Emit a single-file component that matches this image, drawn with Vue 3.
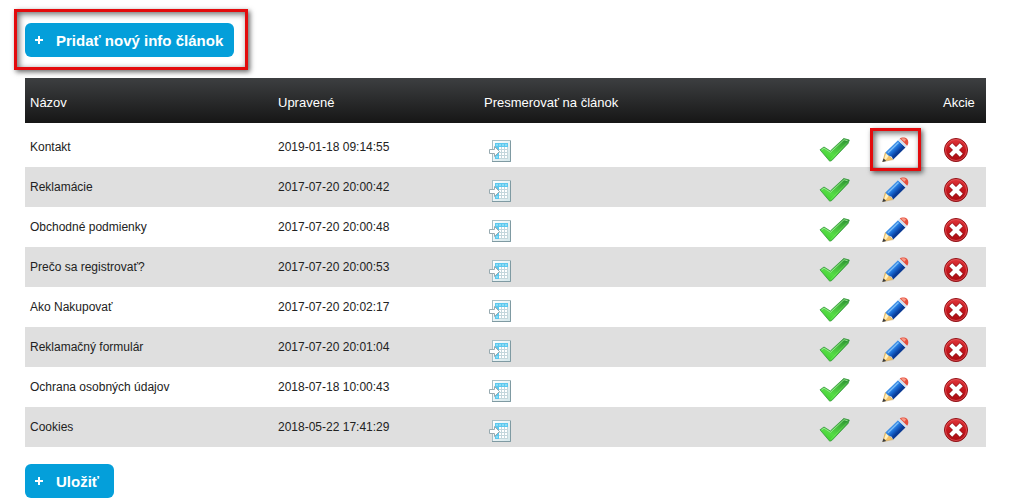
<script setup>
import { ref } from 'vue'

const articles = ref([
  { name: 'Kontakt', updated: '2019-01-18 09:14:55', marked: true },
  { name: 'Reklamácie', updated: '2017-07-20 20:00:42' },
  { name: 'Obchodné podmienky', updated: '2017-07-20 20:00:48' },
  { name: 'Prečo sa registrovať?', updated: '2017-07-20 20:00:53' },
  { name: 'Ako Nakupovať', updated: '2017-07-20 20:02:17' },
  { name: 'Reklamačný formulár', updated: '2017-07-20 20:01:04' },
  { name: 'Ochrana osobných údajov', updated: '2018-07-18 10:00:43' },
  { name: 'Cookies', updated: '2018-05-22 17:41:29' }
])
</script>

<template>
  <main class="page">
    <svg class="defs" aria-hidden="true">
      <defs>
        <linearGradient id="green" x1="1" y1="0" x2="0.3" y2="1">
          <stop offset="0" stop-color="#2a8a35" />
          <stop offset="0.4" stop-color="#43b83c" />
          <stop offset="0.75" stop-color="#55dc45" />
          <stop offset="1" stop-color="#3fd02f" />
        </linearGradient>
        <linearGradient id="blue" gradientUnits="userSpaceOnUse" x1="9" y1="8" x2="18" y2="17">
          <stop offset="0.1" stop-color="#4b97e6" />
          <stop offset="0.35" stop-color="#2f86e6" />
          <stop offset="0.6" stop-color="#1560c8" />
          <stop offset="0.85" stop-color="#0a3a94" />
        </linearGradient>
        <linearGradient id="red" x1="0" y1="0" x2="0" y2="1">
          <stop offset="0" stop-color="#e0383c" />
          <stop offset="0.5" stop-color="#c4161c" />
          <stop offset="1" stop-color="#a80c12" />
        </linearGradient>
        <linearGradient id="sheet" x1="0" y1="0" x2="1" y2="1">
          <stop offset="0" stop-color="#ffffff" />
          <stop offset="1" stop-color="#d3e6ea" />
        </linearGradient>
      </defs>
    </svg>

    <div class="toolbar">
      <button type="button" class="btn btn-add"><span class="plus" aria-hidden="true"></span>Pridať nový info článok</button>
      <span class="callout callout-add" aria-hidden="true"></span>
    </div>

    <table class="articles">
      <colgroup>
        <col class="c-name" />
        <col class="c-date" />
        <col />
        <col class="c-icon" />
        <col class="c-icon" />
        <col class="c-last" />
      </colgroup>
      <thead>
        <tr>
          <th scope="col">Názov</th>
          <th scope="col">Upravené</th>
          <th scope="col">Presmerovať na článok</th>
          <td></td>
          <td></td>
          <th scope="col">Akcie</th>
        </tr>
      </thead>
      <tbody>
        <tr v-for="a in articles" :key="a.name">
          <td>{{ a.name }}</td>
          <td>{{ a.updated }}</td>
          <td>
            <button type="button" class="icon redirect" :aria-label="'Presmerovať: ' + a.name">
              <svg width="22" height="23" viewBox="0 0 22 23">
                <rect x="3.5" y="0.5" width="18" height="21" fill="url(#sheet)" stroke="#a9bfc5" />
                <path d="M3 21.500h18.500V1" fill="none" stroke="#7f9aa2" />
                <rect x="6" y="3" width="13" height="16" fill="#c3d6dc" />
                <path d="M6 3h13v4H6zM6 7h4v12H6z" fill="#5cc8ee" />
                <path d="M10 7h2v2h-2zM13 7h2v2h-2zM16 7h2v2h-2zM10 10h2v2h-2zM13 10h2v2h-2zM16 10h2v2h-2zM10 13h2v2h-2zM13 13h2v2h-2zM16 13h2v2h-2zM10 16h2v2h-2zM13 16h2v2h-2zM16 16h2v2h-2z" fill="#fff" />
                <path d="M7 4h2v2H7zM10 4h2v2h-2zM13 4h2v2h-2zM16 4h2v2h-2zM7 16h2v2H7z" fill="#8edcf5" />
                <path d="M.5 9.500H5.500V6.500L10.500 11.500L5.500 16.500V13.500H.5z" fill="#fff" stroke="#98aab0" />
              </svg>
            </button>
          </td>
          <td>
            <button type="button" class="icon" :aria-label="'Aktívny: ' + a.name">
              <svg width="31" height="26" viewBox="0 0 31 26">
                <path d="M1 12.800L5 10L11.300 14L24.700 1.500L30.300 3L29 6.500L12.800 23.500L10.700 24.200z" fill="url(#green)" stroke="#36983c" stroke-width="0.800" stroke-linejoin="round" />
                <path d="M2.500 13L5 11.200L11.500 15.300L25 2.700L28.700 3.800" fill="none" stroke="#9be893" stroke-width="0.900" />
                <path d="M11.800 22.500L28 5.500" fill="none" stroke="#7bef5f" opacity="0.500" />
              </svg>
            </button>
          </td>
          <td>
            <div class="edit">
              <button type="button" class="icon" :aria-label="'Upraviť: ' + a.name">
                <svg width="28" height="26" viewBox="0 0 28 26">
                  <path d="M1.800 24.600L4.300 15.500L12.200 22.600z" fill="#f3c368" stroke="#c69c50" stroke-width="0.500" />
                  <path d="M3.300 21.500L5 16.800L8 18.500L4.800 22.800z" fill="#fff0bd" />
                  <path d="M1.300 25L2.500 21.500L5.200 24z" fill="#3a3d42" />
                  <path d="M4.300 15.500L17 3.200L24.500 10.500L12.200 22.600L10.800 19.800L7.500 18.500z" fill="url(#blue)" />
                  <path d="M7 15.800L17.500 5.500" stroke="#7dbdf7" stroke-width="1.200" />
                  <path d="M17 3.200L18.800 1.600L26.200 8.800L24.500 10.500z" fill="#d3e0ee" />
                  <path d="M18.800 1.600C20.500 0 24.500 .3 26 1.800C27.600 3.400 27.900 7 26.200 8.800z" fill="#e5513f" />
                  <path d="M20 1.800C22 .9 24 1.300 25 2.500L23.500 4.800z" fill="#f79a88" />
                </svg>
              </button>
              <span v-if="a.marked" class="callout callout-edit" aria-hidden="true"></span>
            </div>
          </td>
          <td>
            <button type="button" class="icon" :aria-label="'Vymazať: ' + a.name">
              <svg width="26" height="26" viewBox="0 0 26 26">
                <circle cx="13" cy="13" r="11.500" fill="url(#red)" stroke="#8f1015" />
                <circle cx="13" cy="13" r="10.500" fill="none" stroke="#e2575a" stroke-width="0.800" />
                <path d="M9.200 9.200L16.800 16.800M16.800 9.200L9.200 16.800" stroke="#8e1217" stroke-width="5.400" stroke-linecap="square" />
                <path d="M9.200 9.200L16.800 16.800M16.800 9.200L9.200 16.800" stroke="#fff" stroke-width="4.200" stroke-linecap="square" />
              </svg>
            </button>
          </td>
        </tr>
      </tbody>
    </table>

    <button type="button" class="btn"><span class="plus" aria-hidden="true"></span>Uložiť</button>
  </main>
</template>

<style>
body {
  margin: 0;
  background: #fff;
}
</style>

<style scoped>
.page {
  padding: 23px 29px 0 25px;
  font-family: "Liberation Sans", Arial, sans-serif;
  font-size: 12px;
  color: #222;
}

.defs {
  position: absolute;
  width: 0;
  height: 0;
}

.toolbar {
  position: relative;
  width: fit-content;
  margin-bottom: 21px;
}

.btn {
  display: flex;
  align-items: center;
  gap: 13px;
  height: 34px;
  padding: 0 15px 0 10px;
  border: 0;
  border-radius: 6px;
  background: #049fda;
  color: #fff;
  font: bold 15px "Liberation Sans", Arial, sans-serif;
  white-space: nowrap;
  cursor: pointer;
}

.btn-add {
  padding-right: 11px;
}

.plus {
  width: 8px;
  height: 8px;
  background:
    linear-gradient(#fff, #fff) center / 8px 2px no-repeat,
    linear-gradient(#fff, #fff) center / 2px 8px no-repeat;
}

.callout {
  position: absolute;
  border: 3px solid #e30b0d;
  box-shadow: 2px 2px 5px rgba(0, 0, 0, 0.6), inset 2px 2px 6px rgba(0, 0, 0, 0.6);
  pointer-events: none;
}

.callout-add {
  inset: -14px -14px -13px -11px;
}

.callout-edit {
  inset: 1px -12px -4px -11px;
}

.articles {
  width: 100%;
  margin-bottom: 17px;
  border-spacing: 0;
  table-layout: fixed;
}

.c-name {
  width: 248px;
}

.c-date {
  width: 206px;
}

.c-icon {
  width: 62px;
}

.c-last {
  width: 48px;
}

th,
td {
  padding: 0 0 0 5px;
  text-align: left;
  white-space: nowrap;
}

thead th,
thead td {
  height: 49px;
  padding-top: 4px;
  box-sizing: border-box;
  border-bottom: 4px solid transparent;
  background: linear-gradient(#3d3f41, #161616) padding-box;
  color: #fff;
  font-size: 13px;
  font-weight: normal;
}

tbody td {
  height: 40px;
}

tbody tr:nth-child(even) {
  background: #dfdfdf;
}

.icon {
  display: flex;
  align-items: center;
  height: 40px;
  padding: 6px 0 0;
  border: 0;
  background: none;
  box-sizing: border-box;
  cursor: pointer;
}

.redirect {
  padding: 8px 0 0 5px;
}

.edit {
  position: relative;
  width: fit-content;
}
</style>
